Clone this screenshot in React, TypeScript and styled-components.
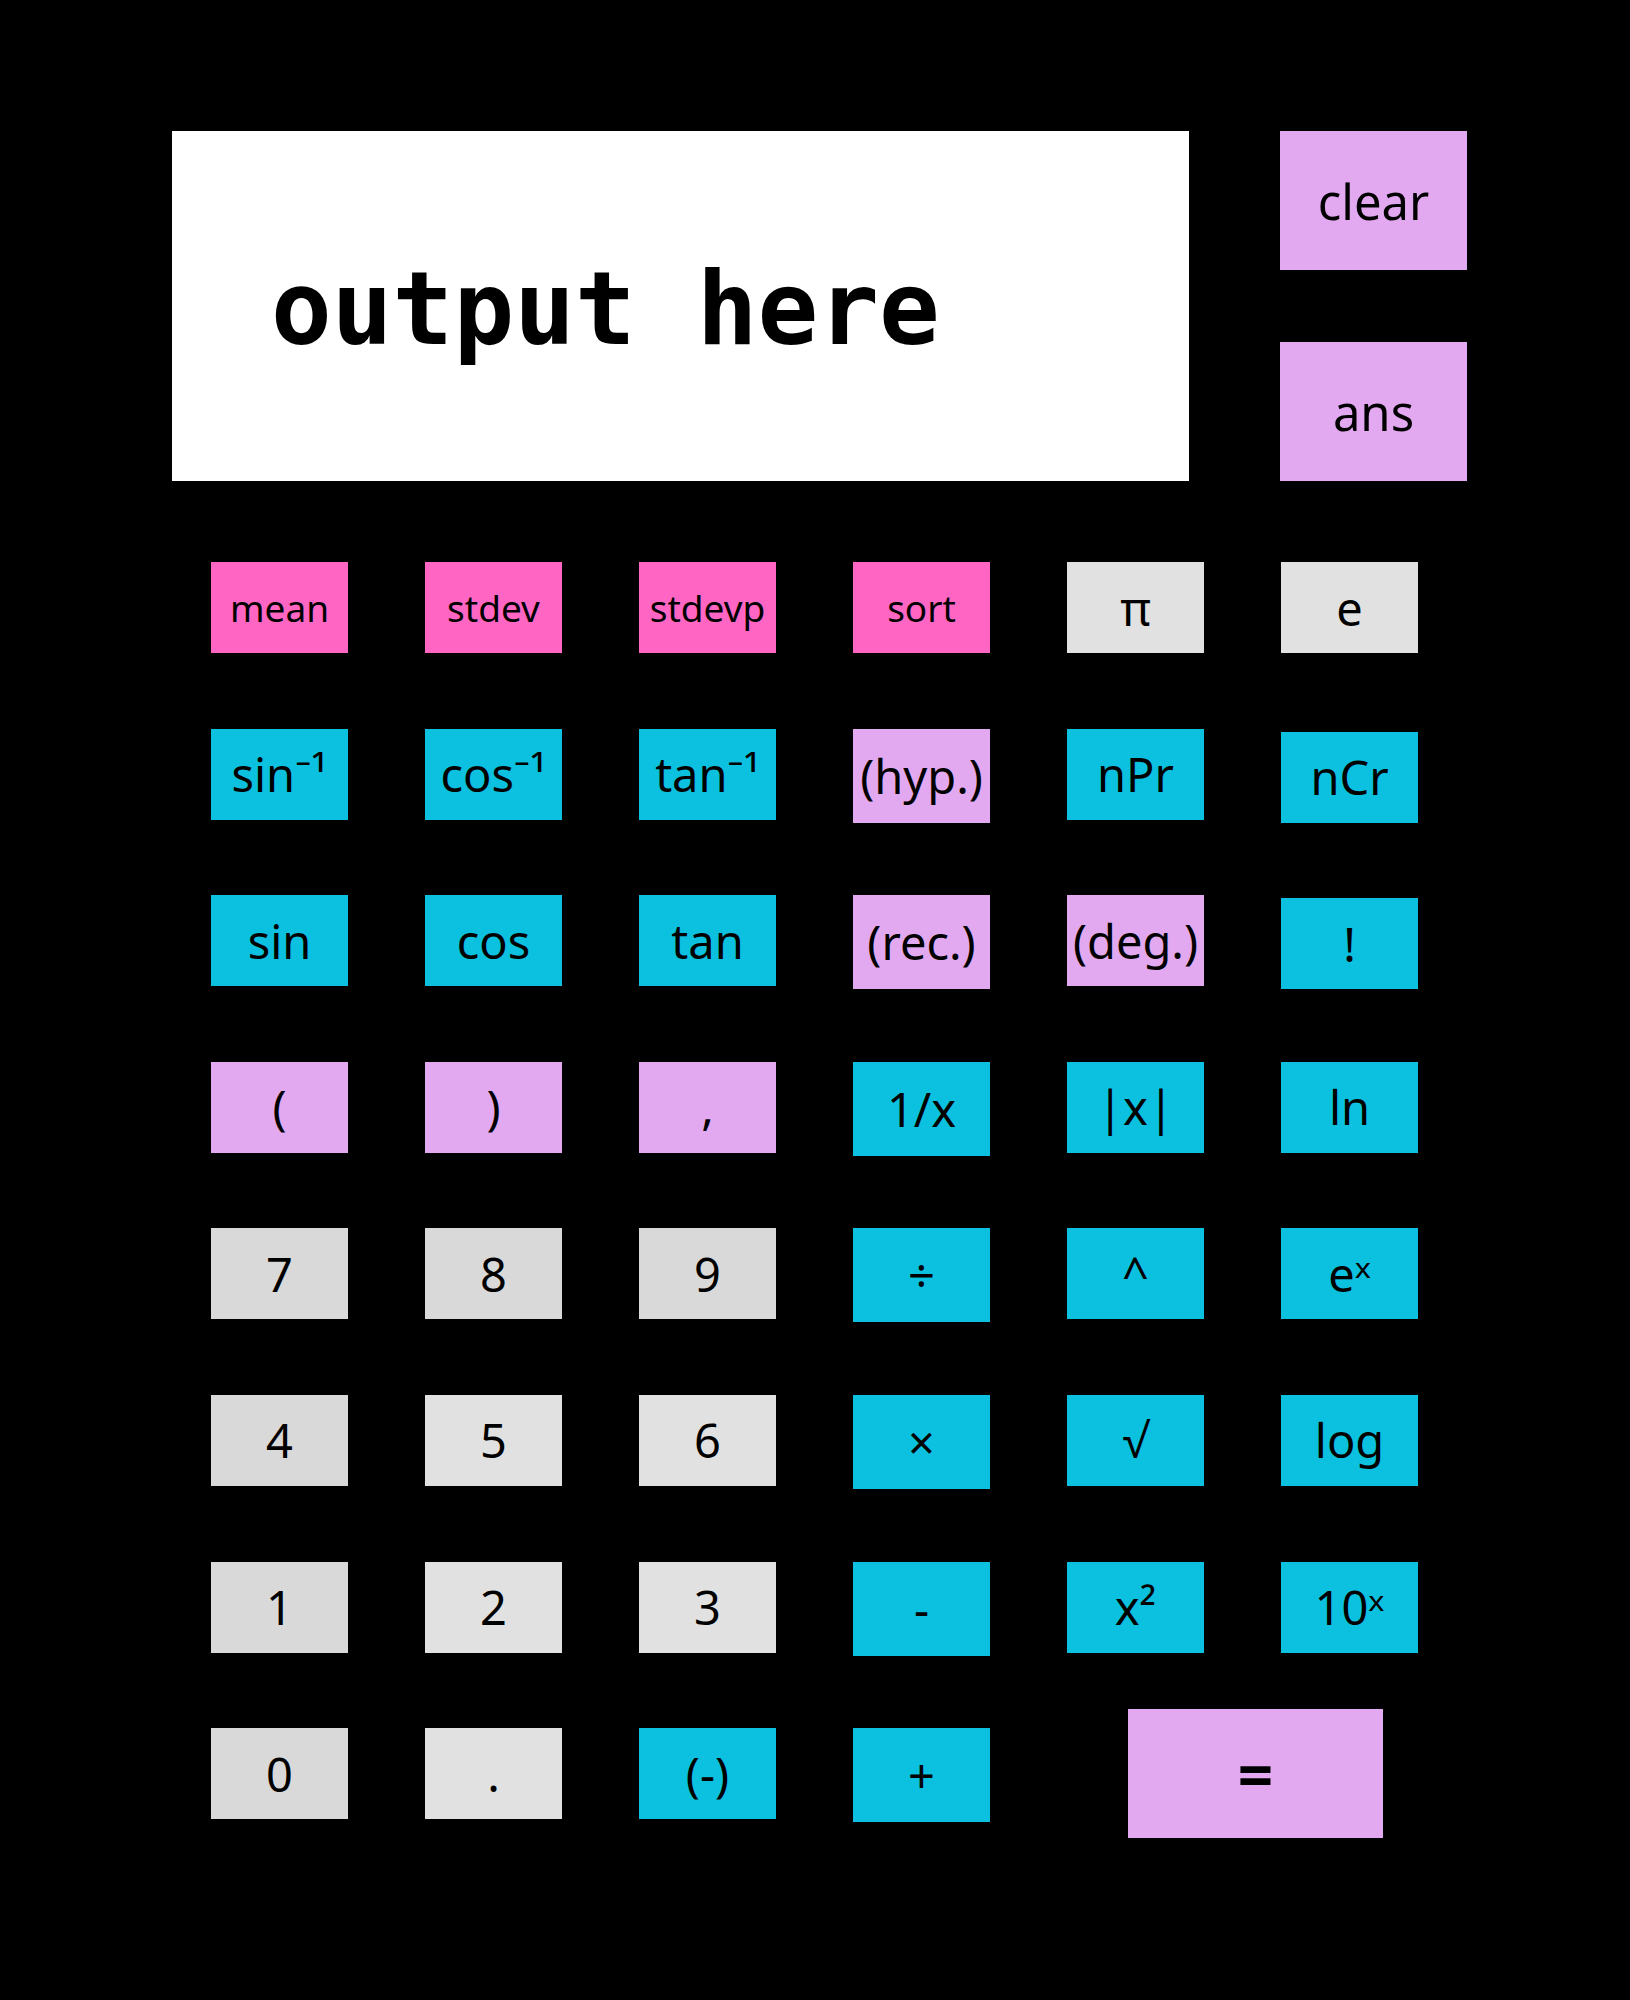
import React from "react";
import styled, { createGlobalStyle } from "styled-components";

type Tone = "pink" | "cyan" | "lilac" | "gray" | "light";

const tones: Record<Tone, string> = {
  pink: "#ff66c4",
  cyan: "#0cc0df",
  lilac: "#e2a9f1",
  gray: "#d9d9d9",
  light: "#e1e1e1",
};

const GlobalStyle = createGlobalStyle`
  html, body {
    margin: 0;
    padding: 0;
    background: #000;
  }
  body {
    font-family: "Noto Sans", "Open Sans", sans-serif;
  }
`;

const Page = styled.main`
  width: 1630px;
  min-height: 2000px;
  box-sizing: border-box;
  background: #000;
  padding: 131px 0 0 172px;
`;

const Top = styled.section`
  display: flex;
  gap: 91px;
  height: 350px;
`;

const Display = styled.div`
  width: 1017px;
  height: 350px;
  box-sizing: border-box;
  background: #fff;
  display: flex;
  align-items: center;
  padding: 6px 0 0 99px;
  font-family: "DejaVu Sans Mono", "Liberation Mono", monospace;
  font-weight: 700;
  font-size: 101px;
  color: #000;
  white-space: pre;
`;

const Side = styled.div`
  display: flex;
  flex-direction: column;
  justify-content: space-between;
  width: 187px;
`;

const KeyBase = styled.button<{ $tone: Tone }>`
  appearance: none;
  border: 0;
  margin: 0;
  padding: 0;
  display: flex;
  align-items: center;
  justify-content: center;
  background: ${(p) => tones[p.$tone]};
  color: #000;
  font-family: "Noto Sans", "Open Sans", sans-serif;
  font-weight: 400;
  line-height: normal;
  white-space: nowrap;
  cursor: pointer;
`;

const SideKey = styled(KeyBase)`
  width: 187px;
  height: 139px;
  font-size: 49px;
`;

const Pad = styled.section`
  margin: 81px 0 0 39px;
  display: grid;
  grid-template-columns: repeat(6, 137px);
  grid-auto-rows: 91px;
  column-gap: 77px;
  row-gap: 75.6px;
  align-items: start;
`;

const Key = styled(KeyBase)<{ $small?: boolean; $tall?: boolean; $drop?: boolean }>`
  width: 137px;
  height: ${(p) => (p.$tall ? 94 : 91)}px;
  margin-top: ${(p) => (p.$drop ? 3 : 0)}px;
  font-size: ${(p) => (p.$small ? 37 : 47)}px;
`;

const Equals = styled(KeyBase)`
  grid-column: span 2;
  justify-self: start;
  width: 255px;
  height: 129px;
  margin: -19px 0 0 61px;
  font-size: 62px;
  font-weight: 700;
`;

type KeyDef = {
  label: string;
  tone: Tone;
  small?: boolean;
  tall?: boolean;
  drop?: boolean;
};

const keys: KeyDef[] = [
  { label: "mean", tone: "pink", small: true },
  { label: "stdev", tone: "pink", small: true },
  { label: "stdevp", tone: "pink", small: true },
  { label: "sort", tone: "pink", small: true },
  { label: "π", tone: "light" },
  { label: "e", tone: "light" },

  { label: "sin⁻¹", tone: "cyan" },
  { label: "cos⁻¹", tone: "cyan" },
  { label: "tan⁻¹", tone: "cyan" },
  { label: "(hyp.)", tone: "lilac", tall: true },
  { label: "nPr", tone: "cyan" },
  { label: "nCr", tone: "cyan", drop: true },

  { label: "sin", tone: "cyan" },
  { label: "cos", tone: "cyan" },
  { label: "tan", tone: "cyan" },
  { label: "(rec.)", tone: "lilac", tall: true },
  { label: "(deg.)", tone: "lilac" },
  { label: "!", tone: "cyan", drop: true },

  { label: "(", tone: "lilac" },
  { label: ")", tone: "lilac" },
  { label: ",", tone: "lilac" },
  { label: "1/x", tone: "cyan", tall: true },
  { label: "|x|", tone: "cyan" },
  { label: "ln", tone: "cyan" },

  { label: "7", tone: "gray" },
  { label: "8", tone: "gray" },
  { label: "9", tone: "gray" },
  { label: "÷", tone: "cyan", tall: true },
  { label: "^", tone: "cyan" },
  { label: "eˣ", tone: "cyan" },

  { label: "4", tone: "gray" },
  { label: "5", tone: "light" },
  { label: "6", tone: "light" },
  { label: "×", tone: "cyan", tall: true },
  { label: "√", tone: "cyan" },
  { label: "log", tone: "cyan" },

  { label: "1", tone: "gray" },
  { label: "2", tone: "light" },
  { label: "3", tone: "light" },
  { label: "-", tone: "cyan", tall: true },
  { label: "x²", tone: "cyan" },
  { label: "10ˣ", tone: "cyan" },

  { label: "0", tone: "gray" },
  { label: ".", tone: "light" },
  { label: "(-)", tone: "cyan" },
  { label: "+", tone: "cyan", tall: true },
];

export default function App() {
  return (
    <>
      <GlobalStyle />
      <Page>
        <Top>
          <Display>output here</Display>
          <Side>
            <SideKey $tone="lilac">clear</SideKey>
            <SideKey $tone="lilac">ans</SideKey>
          </Side>
        </Top>
        <Pad>
          {keys.map((k, i) => (
            <Key
              key={i}
              $tone={k.tone}
              $small={k.small}
              $tall={k.tall}
              $drop={k.drop}
            >
              {k.label}
            </Key>
          ))}
          <Equals $tone="lilac">=</Equals>
        </Pad>
      </Page>
    </>
  );
}
